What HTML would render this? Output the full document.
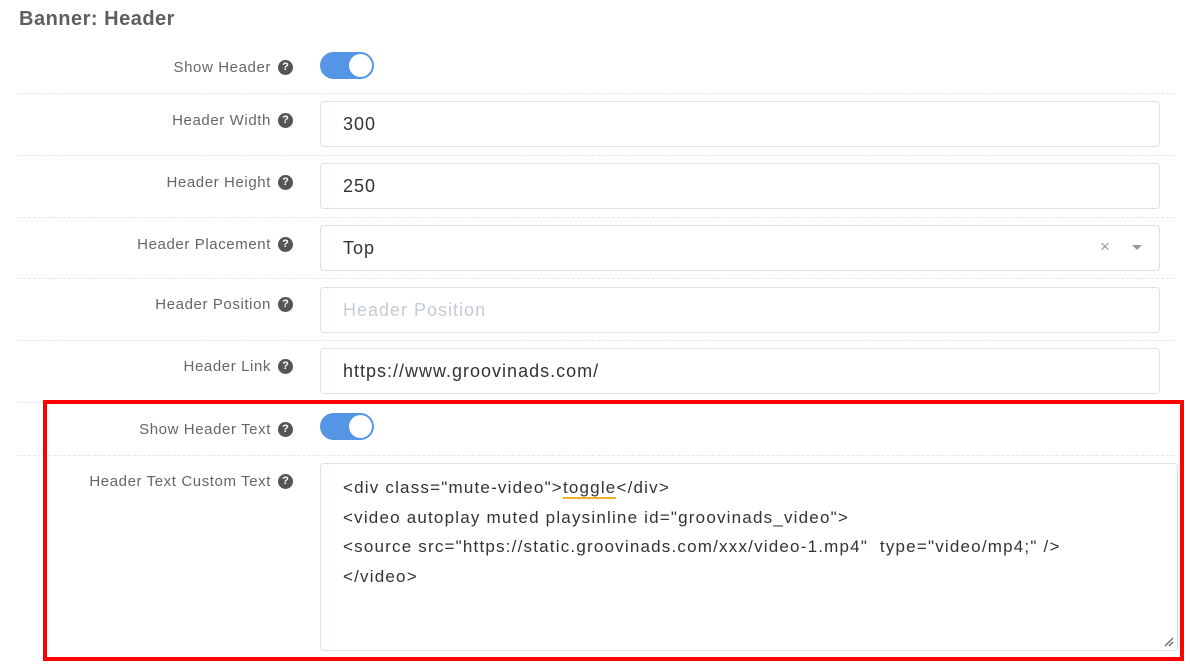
<!DOCTYPE html>
<html><head><style>
*{box-sizing:border-box;margin:0;padding:0}
body{width:1190px;height:665px;background:#fff;font-family:"Liberation Sans",sans-serif;position:relative;overflow:hidden}
.t{position:absolute;left:19px;top:8px;font-size:20px;font-weight:bold;color:#5f5f5f;letter-spacing:0.5px}
.lbl{position:absolute;right:897px;font-size:15px;letter-spacing:0.6px;color:#666;white-space:nowrap;display:flex;align-items:center}
.q{display:inline-block;width:15px;height:15px;border-radius:50%;background:#555;color:#fff;font-size:11px;font-weight:bold;text-align:center;line-height:15px;margin-left:7px;letter-spacing:0}
.sep{position:absolute;left:18px;width:1156px;border-top:1px dashed #e6e6e6}
.inp{position:absolute;left:320px;width:840px;height:46px;border:1px solid #d9e3e6;border-radius:4px;font-size:18px;letter-spacing:1px;color:#333;padding:12px 22px}
.tog{position:absolute;left:320px;width:54px;height:27px;border-radius:14px;background:#5595e6}
.tog::after{content:"";position:absolute;right:2px;top:2px;width:23px;height:23px;border-radius:50%;background:#fff}
.ta{position:absolute;left:320px;top:463px;width:858px;height:188px;border:1px solid #d9e3e6;border-radius:4px;font-size:17px;letter-spacing:1.2px;color:#333;padding:9px 22px;line-height:29.5px}
.red{position:absolute;left:43px;top:400px;width:1141px;height:261px;border:4px solid #f00}
</style></head><body>
<div class="t">Banner: Header</div>

<div class="lbl" style="top:59px">Show Header<span class="q">?</span></div>
<div class="tog" style="top:52px"></div>
<div class="sep" style="top:93px"></div>

<div class="lbl" style="top:112px">Header Width<span class="q">?</span></div>
<div class="inp" style="top:101px">300</div>
<div class="sep" style="top:155px"></div>

<div class="lbl" style="top:174px">Header Height<span class="q">?</span></div>
<div class="inp" style="top:163px">250</div>
<div class="sep" style="top:217px"></div>

<div class="lbl" style="top:236px">Header Placement<span class="q">?</span></div>
<div class="inp" style="top:225px">Top<span style="position:absolute;left:779px;top:11px;color:#999;font-size:17px">×</span><span style="position:absolute;left:811px;top:19px;width:0;height:0;border-left:5px solid transparent;border-right:5px solid transparent;border-top:5px solid #999"></span></div>
<div class="sep" style="top:278px"></div>

<div class="lbl" style="top:296px">Header Position<span class="q">?</span></div>
<div class="inp" style="top:287px;color:#c5ccd3">Header Position</div>
<div class="sep" style="top:340px"></div>

<div class="lbl" style="top:358px">Header Link<span class="q">?</span></div>
<div class="inp" style="top:348px">https://www.groovinads.com/</div>
<div class="sep" style="top:402px"></div>

<div class="lbl" style="top:421px">Show Header Text<span class="q">?</span></div>
<div class="tog" style="top:413px"></div>
<div class="sep" style="top:455px"></div>

<div class="lbl" style="top:473px">Header Text Custom Text<span class="q">?</span></div>
<div class="ta">&lt;div class="mute-video"&gt;<span style="border-bottom:2px solid #f0b030">toggle</span>&lt;/div&gt;<br>&lt;video autoplay muted playsinline id="groovinads_video"&gt;<br>&lt;source src="https://static.groovinads.com/xxx/video-1.mp4"&nbsp; type="video/mp4;" /&gt;<br>&lt;/video&gt;
<svg style="position:absolute;right:3px;bottom:3px" width="10" height="10"><path d="M1 9L9 1M5 9L9 5" stroke="#666" stroke-width="1.3"/></svg></div>
<div class="red"></div>
</body></html>
